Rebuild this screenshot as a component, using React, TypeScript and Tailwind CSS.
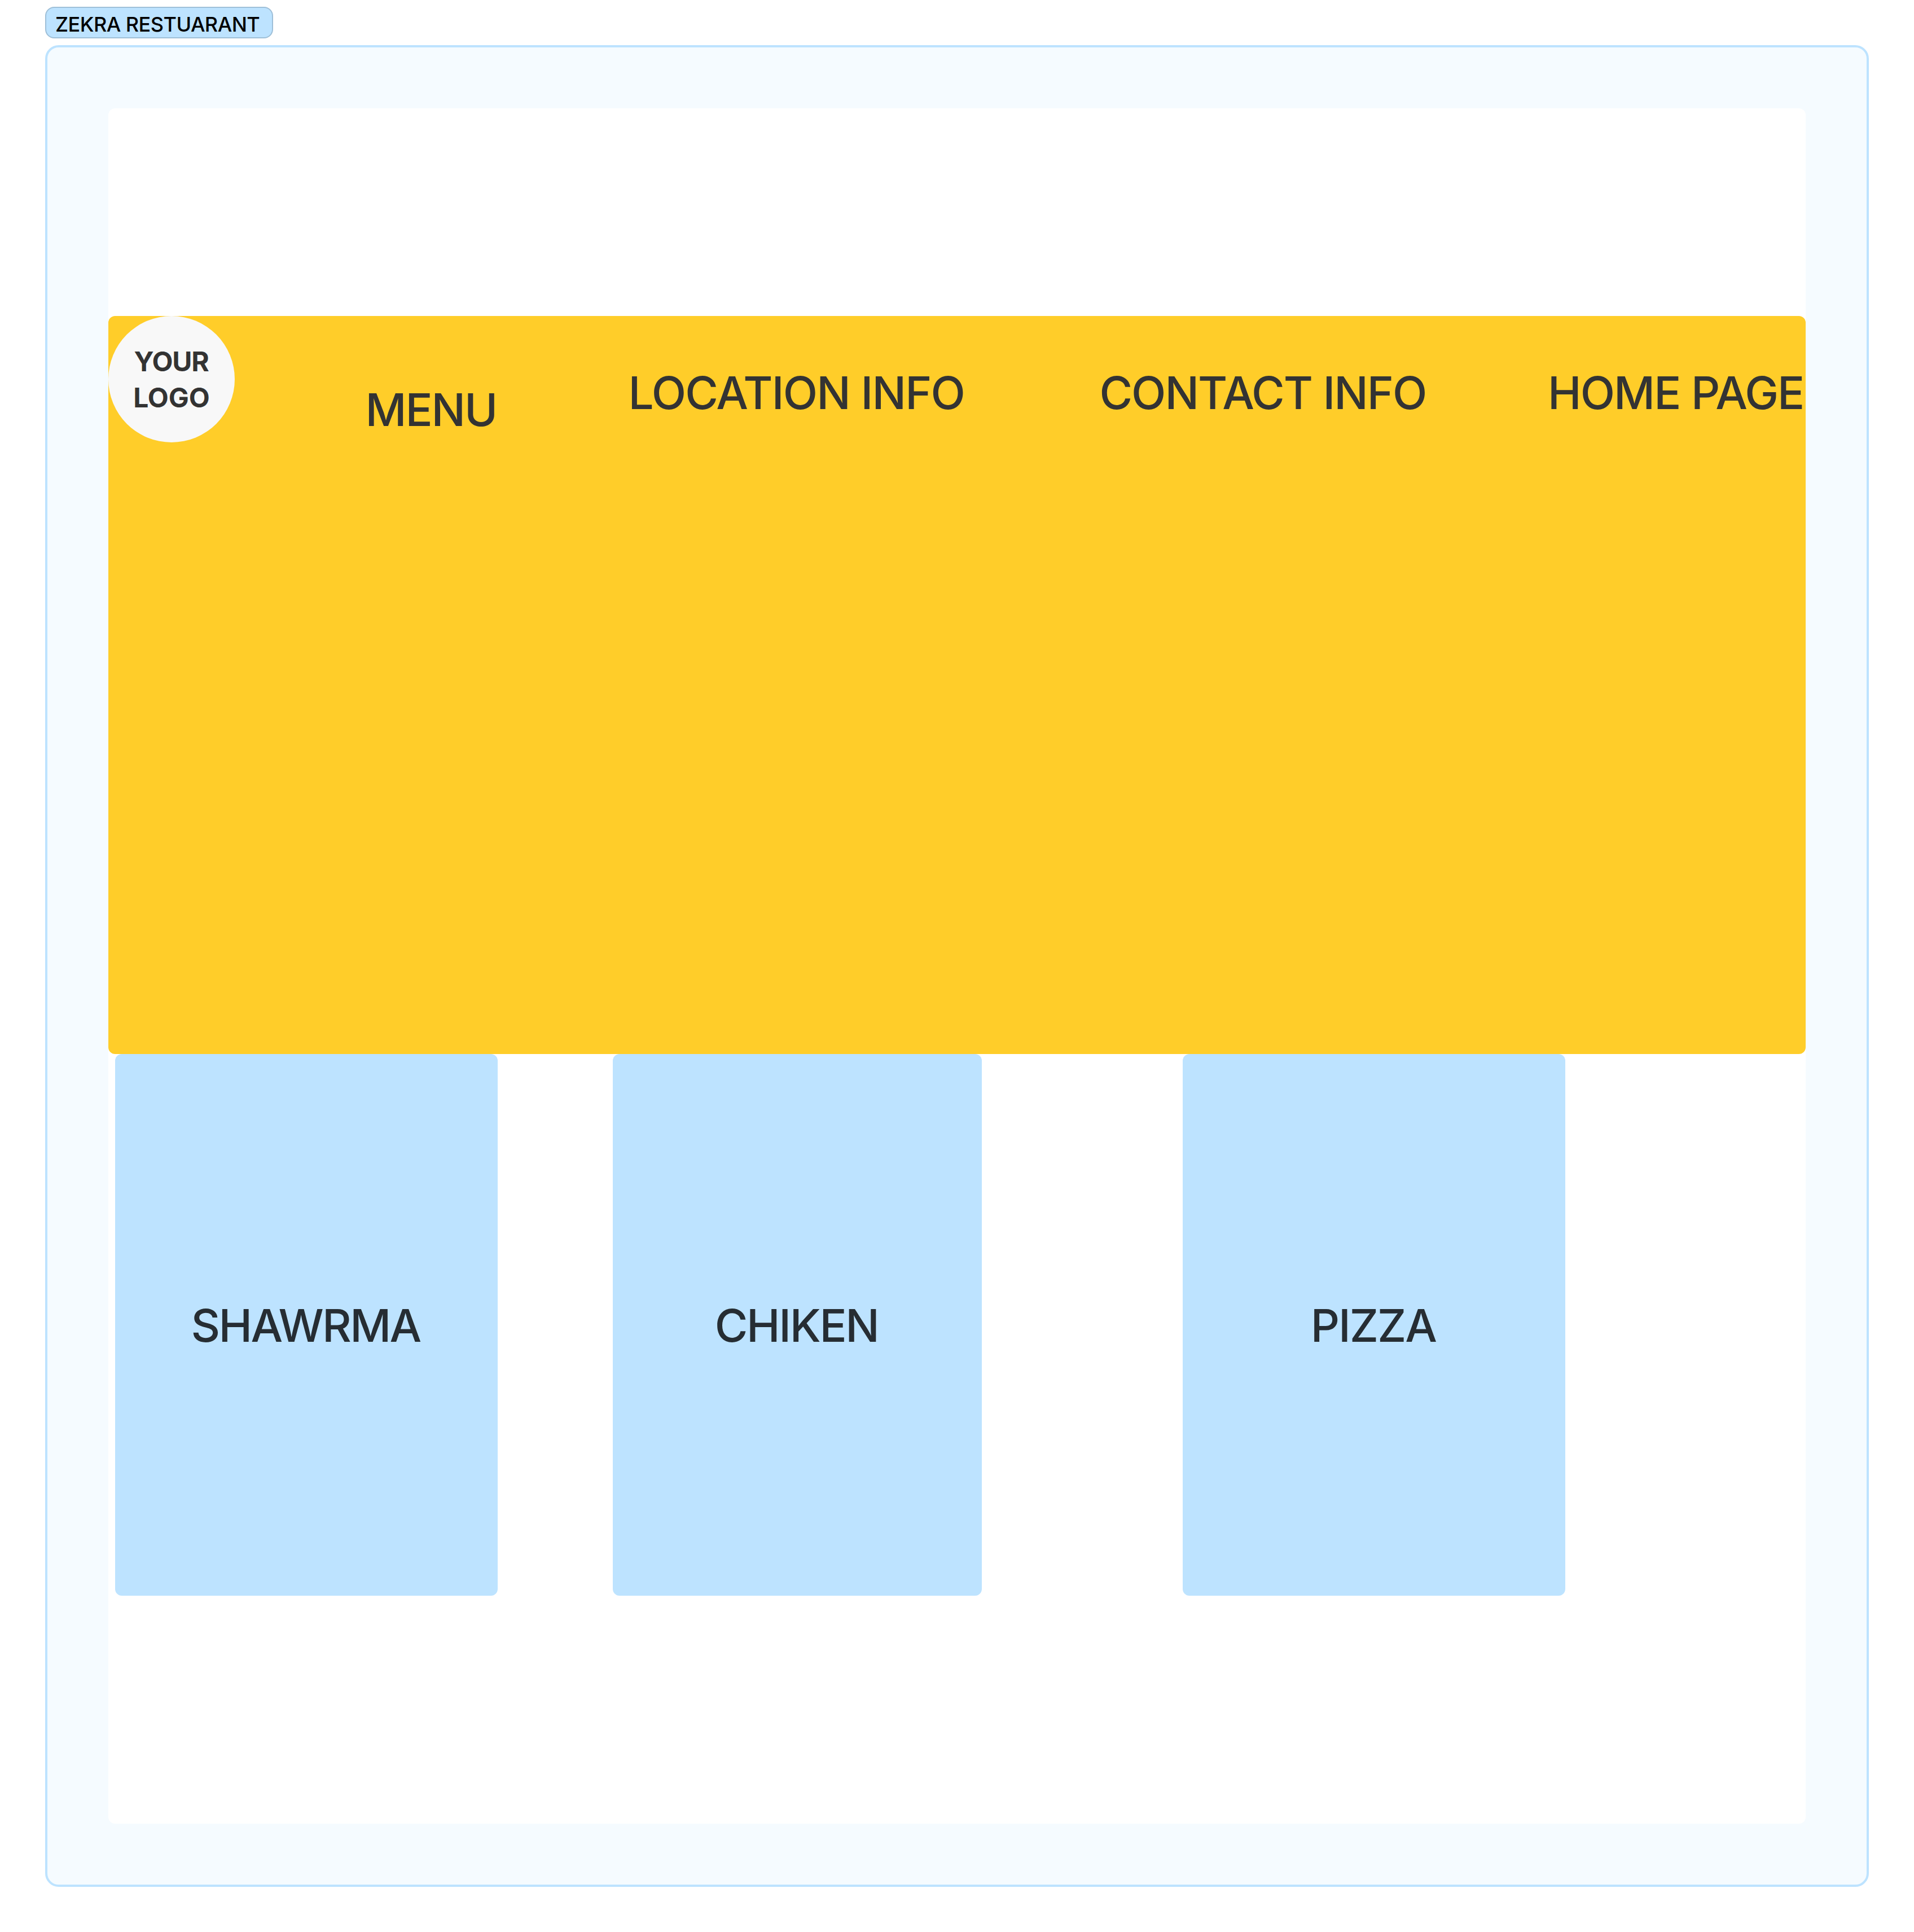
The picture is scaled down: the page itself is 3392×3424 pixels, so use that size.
import React from "react";

function Card({ label, className }: { label: string; className: string }) {
  return (
    <div
      className={
        "h-[960px] rounded-[12px] bg-[#bde3ff] pt-[432px] text-[80px] leading-[97px] font-medium whitespace-nowrap text-[#262d33] " +
        className
      }
    >
      {label}
    </div>
  );
}

export default function App() {
  return (
    <div className="h-[3424px] w-[3392px] overflow-hidden bg-white px-[80px] pt-[12px] font-['Inter',sans-serif]">
      <div className="h-[56px] w-[404px] rounded-[16px] border-2 border-[#9ebfd8] bg-[#bde3ff] pt-[7px] pl-[16px] text-[36px] leading-[44px] font-medium tracking-[-0.53px] whitespace-nowrap text-black">
        ZEKRA RESTUARANT
      </div>
      <main className="mt-[12px] h-[3264px] w-[3232px] rounded-[24px] border-4 border-[#bde3ff] bg-[#f5fbff] p-[108px]">
        <div className="h-[3040px] w-[3008px] rounded-[12px] bg-white pt-[368px]">
          <header className="flex h-[1308px] items-start rounded-[12px] bg-[#ffcd29] text-[80px] leading-[97px] font-medium whitespace-nowrap text-[#333333]">
            <div className="flex size-[224px] shrink-0 flex-col items-start gap-px rounded-full bg-[#f8f8f8] pt-[49px] text-[48px] leading-[63px] font-bold">
              <span className="ml-[45.6px] tracking-[-1.2px]">YOUR</span>
              <span className="ml-[44.2px] tracking-[-0.1px]">LOGO</span>
            </div>
            <nav className="flex shrink-0 items-start">
              <span className="mt-[117px] ml-[231.5px] w-[466px] tracking-[-2.1px]">MENU</span>
              <span className="mt-[87px] w-[834.9px] tracking-[-1.8px]">LOCATION INFO</span>
              <span className="mt-[87px] w-[794.6px] tracking-[-1.98px]">CONTACT INFO</span>
              <span className="mt-[87px] tracking-[-1.9px]">HOME PAGE</span>
            </nav>
          </header>
          <section className="flex pl-[12px]">
            <Card label="SHAWRMA" className="w-[678px] pl-[134.6px] tracking-[-2.7px]" />
            <Card label="CHIKEN" className="ml-[204px] w-[654px] pl-[180.8px] tracking-[-2.35px]" />
            <Card label="PIZZA" className="ml-[356px] w-[678px] pl-[226.7px] tracking-[-2px]" />
          </section>
        </div>
      </main>
    </div>
  );
}
